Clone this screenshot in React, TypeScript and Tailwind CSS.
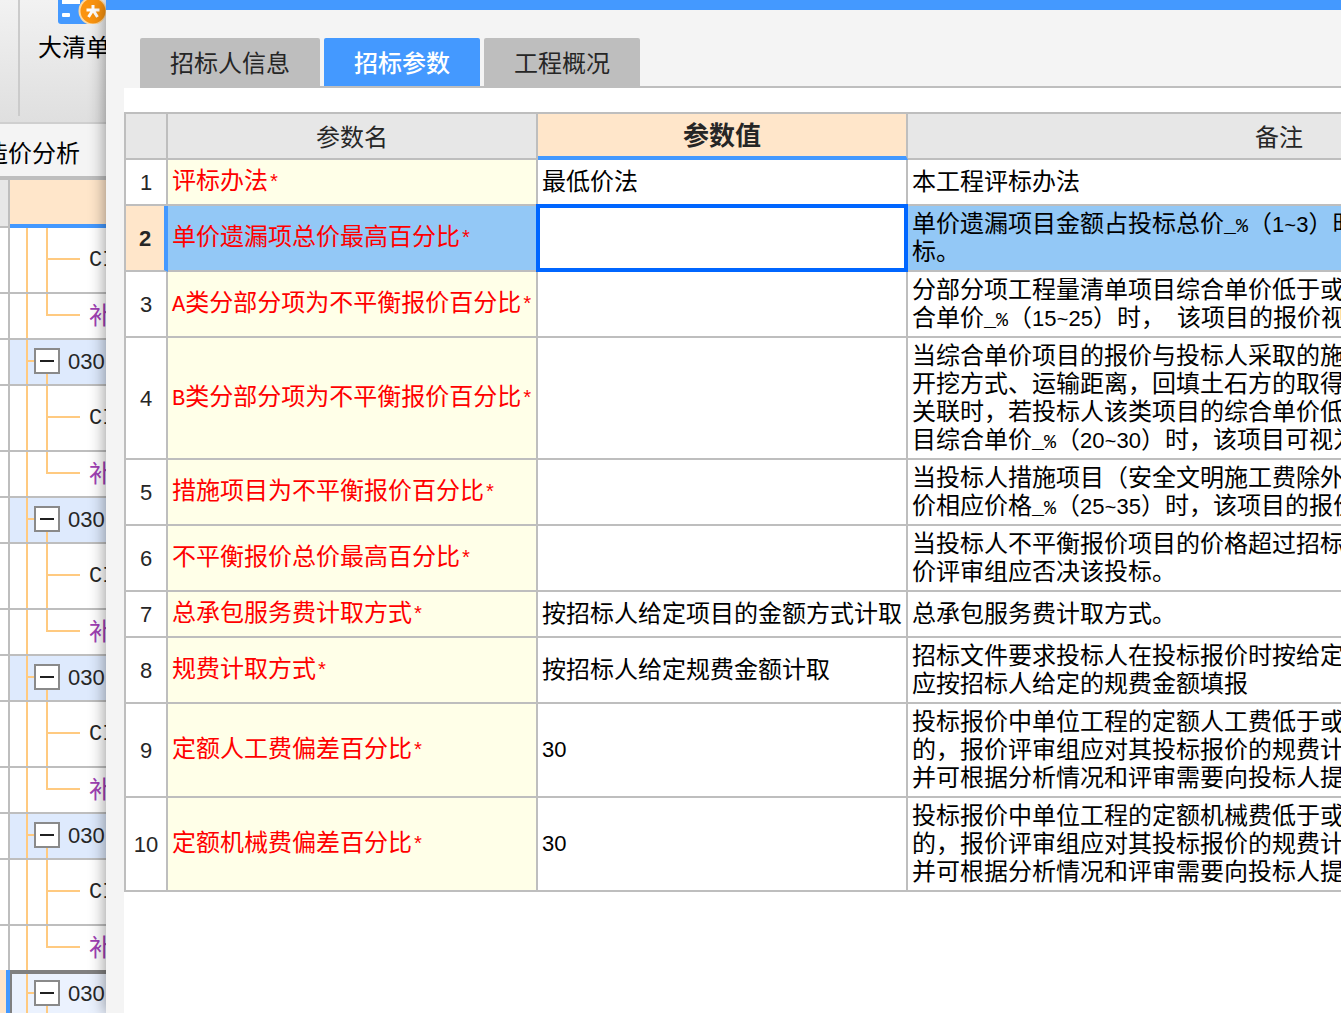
import { useState } from "react";
import clsx from "clsx";

type Param = {
  name: string;
  value: string;
  note: string;
};

const TABS = ["招标人信息", "招标参数", "工程概况"];

const PARAMS: Param[] = [
  { name: "评标办法*", value: "最低价法", note: "本工程评标办法" },
  {
    name: "单价遗漏项总价最高百分比*",
    value: "",
    note: "单价遗漏项目金额占投标总价_%（1~3）时\n标。",
  },
  {
    name: "A类分部分项为不平衡报价百分比*",
    value: "",
    note: "分部分项工程量清单项目综合单价低于或\n合单价_%（15~25）时， 该项目的报价视",
  },
  {
    name: "B类分部分项为不平衡报价百分比*",
    value: "",
    note: "当综合单价项目的报价与投标人采取的施\n开挖方式、运输距离，回填土石方的取得\n关联时，若投标人该类项目的综合单价低\n目综合单价_%（20~30）时，该项目可视为",
  },
  {
    name: "措施项目为不平衡报价百分比*",
    value: "",
    note: "当投标人措施项目（安全文明施工费除外\n价相应价格_%（25~35）时，该项目的报价",
  },
  {
    name: "不平衡报价总价最高百分比*",
    value: "",
    note: "当投标人不平衡报价项目的价格超过招标\n价评审组应否决该投标。",
  },
  { name: "总承包服务费计取方式*", value: "按招标人给定项目的金额方式计取", note: "总承包服务费计取方式。" },
  {
    name: "规费计取方式*",
    value: "按招标人给定规费金额计取",
    note: "招标文件要求投标人在投标报价时按给定\n应按招标人给定的规费金额填报",
  },
  {
    name: "定额人工费偏差百分比*",
    value: "30",
    note: "投标报价中单位工程的定额人工费低于或\n的，报价评审组应对其投标报价的规费计\n并可根据分析情况和评审需要向投标人提",
  },
  {
    name: "定额机械费偏差百分比*",
    value: "30",
    note: "投标报价中单位工程的定额机械费低于或\n的，报价评审组应对其投标报价的规费计\n并可根据分析情况和评审需要向投标人提",
  },
];

// Half-width characters take about half a CJK cell
function Mixed({ text }: { text: string }) {
  const parts = text.split(/([0-9]+|[A-Z]+|[\x20-\x2f\x3a-\x40\x5b-\x7e]+)/).filter(Boolean);
  return (
    <>
      {parts.map((part, i) => {
        if (/^[0-9]/.test(part)) {
          return (
            <span key={i} className="font-['Liberation_Sans',sans-serif] text-[22px]">
              {part}
            </span>
          );
        }
        if (/^[A-Z]/.test(part)) {
          return (
            <span key={i} className="font-['Liberation_Mono',monospace] text-[22px]">
              {part}
            </span>
          );
        }
        if (/^[\x20-\x7e]/.test(part)) {
          return (
            <span key={i} className="font-['Liberation_Mono',monospace] text-[20px]">
              {part}
            </span>
          );
        }
        return part;
      })}
    </>
  );
}

function BillIcon() {
  return (
    <svg width="48" height="24" viewBox="0 0 48 24" aria-hidden="true">
      <path d="M0 0H31V24H3Q0 24 0 21Z" fill="#4499ff" />
      <rect x="4" y="0" width="18" height="4" fill="#fff" />
      <rect x="4" y="13" width="8" height="4" rx="1" fill="#fff" />
      <circle cx="34.5" cy="11" r="14" fill="#ffd9a0" />
      <circle cx="35" cy="11" r="12.5" fill="#fb940f" />
      <path d="M35 5V11M28.5 10H41.5M35 10L30.5 17M35 10L39.5 17" stroke="#fff" strokeWidth="3" fill="none" />
    </svg>
  );
}

function ItemRow({ code, supplement }: { code: string; supplement?: boolean }) {
  return (
    <div className={clsx("flex items-center border-b-2 border-[#bebebe] bg-white", supplement ? "h-[46px]" : "h-[66px]")}>
      <svg width="79" height={supplement ? 44 : 64} className="shrink-0" aria-hidden="true">
        <path
          d={supplement ? "M17 0V44M37 0V21H70" : "M17 0V64M37 0V64M37 31H70"}
          stroke="#ffca80"
          strokeWidth="2"
          fill="none"
        />
      </svg>
      <span className={clsx("pb-1 whitespace-nowrap", supplement ? "text-[#a040b4]" : "text-[#262626]")}>
        <Mixed text={code} />
      </span>
    </div>
  );
}

function GroupRow({ current }: { current?: boolean }) {
  return (
    <div
      className={clsx(
        "flex h-[46px] border-b-2 border-[#bebebe]",
        current ? "-mr-2 bg-[#ebf2fe] outline-4 -outline-offset-2 outline-[#808080]" : "bg-[#deeafd]",
      )}
    >
      <svg width="24" height="44" className="shrink-0" aria-hidden="true">
        <path d="M17 0V44M17 21H24" stroke="#ffca80" strokeWidth="2" fill="none" />
      </svg>
      <div className="flex w-[26px] shrink-0 flex-col pt-2">
        <button
          aria-label="折叠"
          className="flex size-[26px] shrink-0 items-center justify-center border-2 border-[#8a8a8a] bg-white"
        >
          <span className="h-0.5 w-3.5 bg-[#202020]" />
        </button>
        <div className="ml-3 w-0.5 flex-1 bg-[#ffca80]" />
      </div>
      <span className="self-center pb-1 pl-2 whitespace-nowrap text-[#262626]">
        <Mixed text="030" />
      </span>
    </div>
  );
}

function Backdrop() {
  return (
    <aside className="flex w-[106px] shrink-0 flex-col overflow-hidden">
      <div className="flex h-[124px] shrink-0 border-b-2 border-[#cfcfcf] bg-linear-to-b from-[#f2f2f2] to-[#dfdfdf]">
        <div className="mb-1.5 w-5 shrink-0 border-r-2 border-[#cbcbcb]" />
        <button className="flex flex-col items-start pl-[18px] text-black">
          <span className="pl-5">
            <BillIcon />
          </span>
          <span className="pt-2 leading-7 whitespace-nowrap">大清单</span>
        </button>
      </div>
      <div className="flex h-[52px] w-20 shrink-0 items-center justify-end pt-1 whitespace-nowrap text-black">
        造价分析
      </div>
      <div className="flex flex-1 border-t-4 border-[#bebebe]">
        <div className="flex w-2.5 shrink-0 flex-col border-r-2 border-[#bebebe]">
          <div className="h-12 border-b-2 border-[#bebebe] bg-[#e7e7e7]" />
          {[0, 1, 2, 3, 4].map((i) => (
            <div key={i}>
              <div className="h-[66px] border-b-2 border-[#bebebe] bg-white" />
              <div className="h-[46px] border-b-2 border-[#bebebe] bg-white" />
              <div
                className={
                  i === 4
                    ? "relative z-10 -mt-0.5 h-12 w-2.5 border-r-4 border-[#4499ff] bg-[#ffe6ca]"
                    : "h-[46px] border-b-2 border-[#bebebe] bg-white"
                }
              />
            </div>
          ))}
        </div>
        <div className="min-w-0 flex-1">
          <div className="h-12 border-b-4 border-[#4499ff] bg-[#ffe6ca]" />
          {[0, 1, 2, 3, 4].map((i) => (
            <div key={i}>
              <ItemRow code="CI" />
              <ItemRow code="补" supplement />
              <GroupRow current={i === 4} />
            </div>
          ))}
        </div>
      </div>
    </aside>
  );
}

function ParamTable() {
  const [values, setValues] = useState(PARAMS.map((p) => p.value));
  const selected = 1;

  return (
    <table className="w-[1528px] table-fixed border-separate border-spacing-0 border-t-2 border-l-2 border-[#bebebe] text-black">
      <colgroup>
        <col className="w-[42px]" />
        <col className="w-[370px]" />
        <col className="w-[370px]" />
        <col />
      </colgroup>
      <thead>
        <tr className="h-[46px] bg-[#e7e7e7] text-[#262626]">
          <th aria-label="序号" className="border-r-2 border-b-2 border-[#bebebe] p-0" />
          <th className="border-r-2 border-b-2 border-[#bebebe] p-0 font-normal">参数名</th>
          <th className="border-r-2 border-b-4 border-r-[#bebebe] border-b-[#4499ff] bg-[#ffe6ca] p-0 pb-0.5 text-[26px] font-bold">
            参数值
          </th>
          <th className="border-r-2 border-b-2 border-[#bebebe] p-0 font-normal">备注</th>
        </tr>
      </thead>
      <tbody>
        {PARAMS.map((param, i) => (
          <tr key={param.name} className="h-[46px]">
            <th
              className={clsx(
                "border-b-2 border-b-[#bebebe] p-0 pb-0.5 text-[#262626]",
                i === selected
                  ? "border-r-4 border-r-[#4499ff] bg-[#ffe6ca] font-bold"
                  : "border-r-2 border-r-[#bebebe] bg-white font-normal",
              )}
            >
              <Mixed text={String(i + 1)} />
            </th>
            <td
              className={clsx(
                "border-r-2 border-b-2 border-[#bebebe] px-1 pb-0.5 whitespace-nowrap text-[#ff0000]",
                i === selected ? "bg-[#93c8f6]" : "bg-[#ffffe8]",
              )}
            >
              <Mixed text={param.name} />
            </td>
            <td
              className={clsx(
                "border-r-2 border-b-2 border-[#bebebe] bg-white pt-0 whitespace-nowrap",
                i === selected ? "px-0 pb-0" : "px-1 pb-1",
              )}
            >
              {i === selected ? (
                <input
                  aria-label={param.name}
                  value={values[i]}
                  onChange={(e) => setValues(values.map((v, n) => (n === i ? e.target.value : v)))}
                  className="relative block h-16 w-full bg-white px-1 outline-4 -outline-offset-2 outline-[#0066ff]"
                />
              ) : (
                <Mixed text={values[i]} />
              )}
            </td>
            <td
              className={clsx(
                "border-r-2 border-b-2 border-[#bebebe] px-1 pt-0.5 pb-1.5 whitespace-pre",
                i === selected ? "bg-[#93c8f6]" : "bg-white",
              )}
            >
              {param.note.split("\n").map((line) => (
                <div key={line} className="h-7">
                  <Mixed text={line} />
                </div>
              ))}
            </td>
          </tr>
        ))}
      </tbody>
    </table>
  );
}

export default function App() {
  const [tab, setTab] = useState(1);

  return (
    <div className="flex h-screen overflow-hidden bg-[#f4f4f4] font-['Noto_Sans_CJK_SC',sans-serif] text-[24px] leading-7">
      <Backdrop />
      <main className="relative z-20 flex min-w-0 flex-1 flex-col border-t-[10px] border-[#4499ff] bg-[#f4f4f4] pl-[18px] shadow-[0_0_16px_rgba(0,0,0,0.45)]">
        <nav className="ml-4 flex shrink-0 gap-1 border-b-2 border-[#bebebe] pt-7">
          {TABS.map((label, i) => (
            <button
              key={label}
              onClick={() => setTab(i)}
              className={clsx(
                "h-12 rounded-t-xs px-[30px] whitespace-nowrap",
                i === tab ? "bg-[#4499ff] font-medium text-white" : "bg-[#bebebe] text-[#262626]",
              )}
            >
              {label}
            </button>
          ))}
        </nav>
        <section className="flex-1 overflow-hidden bg-white pt-6">
          <ParamTable />
        </section>
      </main>
    </div>
  );
}
